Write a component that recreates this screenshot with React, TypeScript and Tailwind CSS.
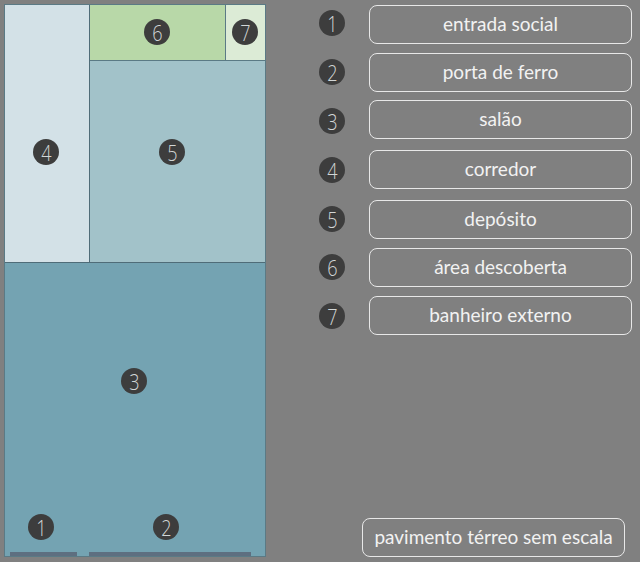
const Dot = ({ n, className = "" }: { n: number; className?: string }) => (
  <div className={`flex h-[26px] w-[26px] items-center justify-center rounded-full bg-[#3d3d3d] font-['Open_Sans',sans-serif] text-[22px] font-light leading-none text-[#d2d6d6] ${className}`}>
    <span className="inline-block scale-x-[0.82]">{n}</span>
  </div>
);

const Btn = ({ label, className = "" }: { label: string; className?: string }) => (
  <div className={`flex h-[39px] items-center justify-center rounded-[8px] border border-[#e8e8e8] text-[19px] text-[#f2f2f2] ${className}`}>
    {label}
  </div>
);

const rows = [
  { label: "entrada social", mt: "mt-[5px]" },
  { label: "porta de ferro", mt: "mt-[9px]" },
  { label: "salão", mt: "mt-[8px]" },
  { label: "corredor", mt: "mt-[11px]" },
  { label: "depósito", mt: "mt-[11px]" },
  { label: "área descoberta", mt: "mt-[9px]" },
  { label: "banheiro externo", mt: "mt-[9px]" },
];
const dotTops = ["mt-[10px]", "mt-[23px]", "mt-[23px]", "mt-[23px]", "mt-[23px]", "mt-[22px]", "mt-[23px]"];

export default function App() {
  return (
    <div className="flex h-[562px] w-[640px] overflow-hidden bg-[#808080] font-['Lato',sans-serif]">
      <div className="relative mb-[5px] ml-1 mt-1 flex h-[553px] w-[262px] flex-col border border-[#5b7a85]">
        <div className="flex h-[258px] shrink-0 border-b border-[#4f6c78]">
          <div className="w-[85px] border-r border-[#4f6c78] bg-[#d3e1e7]" />
          <div className="flex flex-1 flex-col">
            <div className="flex h-[56px] shrink-0 border-b border-[#5b7a85]">
              <div className="w-[136px] border-r border-[#5b7a85] bg-[#b8d8a8]" />
              <div className="flex-1 bg-[#dcebd6]" />
            </div>
            <div className="flex-1 bg-[#a2c2c9]" />
          </div>
        </div>
        <div className="flex-1 bg-[#74a3b2]" />
        <div className="absolute bottom-0 left-[5px] h-[4px] w-[67px] bg-[#5e6f80]" />
        <div className="absolute bottom-0 left-[84px] h-[4px] w-[162px] bg-[#5e6f80]" />
        <Dot n={1} className="absolute left-[23px] top-[509px]" />
        <Dot n={2} className="absolute left-[148px] top-[509px]" />
        <Dot n={3} className="absolute left-[116px] top-[363px]" />
        <Dot n={4} className="absolute left-[28px] top-[134px]" />
        <Dot n={5} className="absolute left-[154px] top-[134px]" />
        <Dot n={6} className="absolute left-[139px] top-[14px]" />
        <Dot n={7} className="absolute left-[227px] top-[14px]" />
      </div>

      <div className="ml-[53px] flex w-[26px] flex-col">
        {dotTops.map((t, i) => (
          <Dot key={i} n={i + 1} className={t} />
        ))}
      </div>

      <div className="relative ml-[24px] flex w-[263px] flex-col">
        {rows.map((r) => (
          <Btn key={r.label} label={r.label} className={r.mt} />
        ))}
        <Btn label="pavimento térreo sem escala" className="absolute left-[-7px] top-[518px] w-[263px]" />
      </div>
    </div>
  );
}
